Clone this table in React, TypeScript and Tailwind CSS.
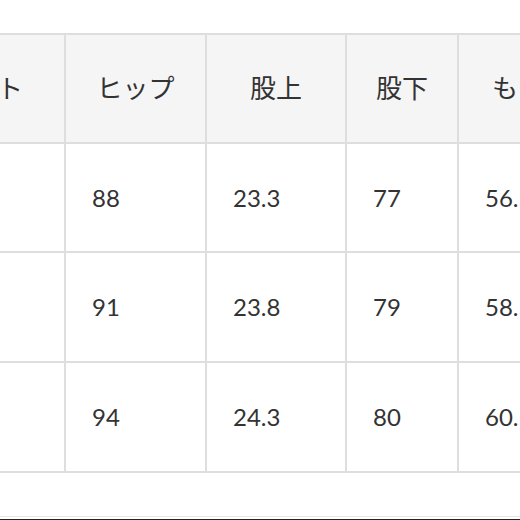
const headers = ['ウエスト', 'ヒップ', '股上', '股下', 'もも周り']
const rows = [
  { cells: ['70', '88', '23.3', '77', '56.5'], h: 'h-[109px]' },
  { cells: ['73', '91', '23.8', '79', '58.5'], h: 'h-[110px]' },
  { cells: ['76', '94', '24.3', '80', '60.5'], h: 'h-[110px]' },
]
const widths = ['w-[188px]', 'w-[141px]', 'w-[140px]', 'w-[112px]', 'w-[172px]']

export default function App() {
  return (
    <div
      className="flex h-[520px] w-[520px] flex-col overflow-hidden bg-white text-[24px] text-[#333333]"
      style={{ fontFamily: "Lato, 'Noto Sans CJK JP', sans-serif" }}
    >
      <div className="mt-[33px] -ml-[124px] flex w-max flex-col border-t-2 border-l-2 border-[#dedede]">
        <div className="flex bg-[#f5f5f5] text-[26px]">
          {headers.map((h, i) => (
            <div
              key={h}
              className={`${widths[i]} flex h-[109px] shrink-0 items-center justify-center border-r-2 border-b-2 border-[#dedede]`}
            >
              {h}
            </div>
          ))}
        </div>
        {rows.map((r, ri) => (
          <div key={ri} className="flex">
            {r.cells.map((c, i) => (
              <div
                key={i}
                className={`${widths[i]} ${r.h} flex shrink-0 items-center border-r-2 border-b-2 border-[#dedede] pl-[26px]`}
              >
                {c}
              </div>
            ))}
          </div>
        ))}
      </div>
      <div className="flex-1" />
      <div className="h-px bg-[#e6e6e6]" />
      <div className="h-[2px] bg-white" />
      <div className="h-px bg-[#222222]" />
    </div>
  )
}
